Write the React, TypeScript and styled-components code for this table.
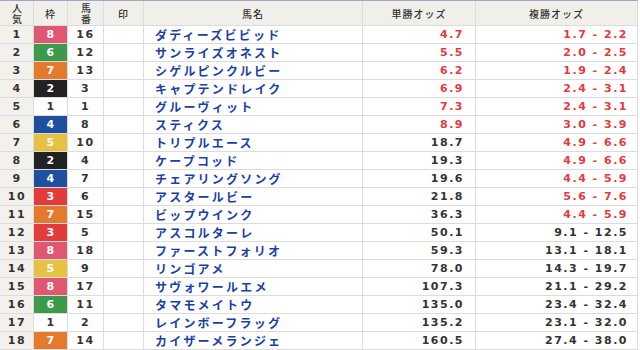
import React from "react";
import styled, { createGlobalStyle, css } from "styled-components";

const Global = createGlobalStyle`
  html, body { margin: 0; padding: 0; background: #ffffff; }
  body { font-family: "DejaVu Sans", "Noto Sans CJK JP", sans-serif; }
`;

const Table = styled.div`
  display: grid;
  grid-template-columns: 34px 34px 36px 40px 219px 113px 162px;
  width: 638px;
  border-top: 1px solid #a2a6c4;
  background: #ffffff;
`;

const Cell = styled.div<{ $align?: "left" | "center" | "right"; $beige?: boolean }>`
  box-sizing: border-box;
  height: 18px;
  border-right: 1px solid #dcdcdc;
  border-bottom: 1px solid #dcdcdc;
  display: flex;
  align-items: center;
  justify-content: ${(p) =>
    p.$align === "left" ? "flex-start" : p.$align === "right" ? "flex-end" : "center"};
  background: ${(p) => (p.$beige ? "#f3f1ec" : "#ffffff")};
  font-size: 11px;
  font-weight: bold;
  color: #333333;
  letter-spacing: 1.5px;
  white-space: nowrap;
  overflow: hidden;
`;

const HeadCell = styled(Cell)`
  height: 25px;
  background: #f1efea;
  font-family: "Noto Sans CJK JP", sans-serif;
  font-size: 10px;
  font-weight: 500;
  letter-spacing: 1px;
  color: #333333;
`;

const VerticalLabel = styled.span`
  writing-mode: vertical-rl;
  text-orientation: upright;
  font-size: 10px;
  line-height: 12px;
  letter-spacing: 1px;
  padding-top: 1px;
`;

const RankCell = styled(Cell)`
  padding-left: 1px;
`;

const frameColors: Record<number, [string, string]> = {
  1: ["#ffffff", "#333333"],
  2: ["#222222", "#ffffff"],
  3: ["#e23b3b", "#ffffff"],
  4: ["#1f4f9f", "#ffffff"],
  5: ["#e6c142", "#ffffff"],
  6: ["#3d9a4a", "#ffffff"],
  7: ["#e47a2c", "#ffffff"],
  8: ["#df5771", "#ffffff"],
};

const FrameCell = styled(Cell)<{ $frame: number }>`
  ${(p) => css`
    background: ${frameColors[p.$frame][0]};
    color: ${frameColors[p.$frame][1]};
  `}
  padding-left: 1px;
`;

const NameCell = styled(Cell)`
  padding-left: 11px;
  color: #1b3fa3;
  font-size: 12px;
  letter-spacing: 2.2px;
  font-family: "Noto Sans CJK JP", sans-serif;
`;

const OddsCell = styled(Cell)<{ $red?: boolean; $pad: number }>`
  padding-right: ${(p) => p.$pad}px;
  color: ${(p) => (p.$red ? "#e53a3e" : "#333333")};
`;

type Row = [number, number, number, string, string, string, boolean, boolean];

const rows: Row[] = [
  [1, 8, 16, "ダディーズビビッド", "4.7", "1.7 - 2.2", true, true],
  [2, 6, 12, "サンライズオネスト", "5.5", "2.0 - 2.5", true, true],
  [3, 7, 13, "シゲルピンクルビー", "6.2", "1.9 - 2.4", true, true],
  [4, 2, 3, "キャプテンドレイク", "6.9", "2.4 - 3.1", true, true],
  [5, 1, 1, "グルーヴィット", "7.3", "2.4 - 3.1", true, true],
  [6, 4, 8, "スティクス", "8.9", "3.0 - 3.9", true, true],
  [7, 5, 10, "トリプルエース", "18.7", "4.9 - 6.6", false, true],
  [8, 2, 4, "ケープコッド", "19.3", "4.9 - 6.6", false, true],
  [9, 4, 7, "チェアリングソング", "19.6", "4.4 - 5.9", false, true],
  [10, 3, 6, "アスタールビー", "21.8", "5.6 - 7.6", false, true],
  [11, 7, 15, "ビップウインク", "36.3", "4.4 - 5.9", false, true],
  [12, 3, 5, "アスコルターレ", "50.1", "9.1 - 12.5", false, false],
  [13, 8, 18, "ファーストフォリオ", "59.3", "13.1 - 18.1", false, false],
  [14, 5, 9, "リンゴアメ", "78.0", "14.3 - 19.7", false, false],
  [15, 8, 17, "サヴォワールエメ", "107.3", "21.1 - 29.2", false, false],
  [16, 6, 11, "タマモメイトウ", "135.0", "23.4 - 32.4", false, false],
  [17, 1, 2, "レインボーフラッグ", "135.2", "23.1 - 32.0", false, false],
  [18, 7, 14, "カイザーメランジェ", "160.5", "27.4 - 38.0", false, false],
];

export default function App() {
  return (
    <>
      <Global />
      <Table>
        <HeadCell>
          <VerticalLabel>人気</VerticalLabel>
        </HeadCell>
        <HeadCell>枠</HeadCell>
        <HeadCell>
          <VerticalLabel>馬番</VerticalLabel>
        </HeadCell>
        <HeadCell>印</HeadCell>
        <HeadCell>馬名</HeadCell>
        <HeadCell>単勝オッズ</HeadCell>
        <HeadCell>複勝オッズ</HeadCell>
        {rows.map(([rank, frame, num, name, win, place, winRed, placeRed]) => (
          <React.Fragment key={rank}>
            <RankCell $beige>{rank}</RankCell>
            <FrameCell $frame={frame}>{frame}</FrameCell>
            <Cell>{num}</Cell>
            <Cell />
            <NameCell $align="left">{name}</NameCell>
            <OddsCell $align="right" $pad={11} $red={winRed}>
              {win}
            </OddsCell>
            <OddsCell $align="right" $pad={9} $red={placeRed}>
              {place}
            </OddsCell>
          </React.Fragment>
        ))}
      </Table>
    </>
  );
}
